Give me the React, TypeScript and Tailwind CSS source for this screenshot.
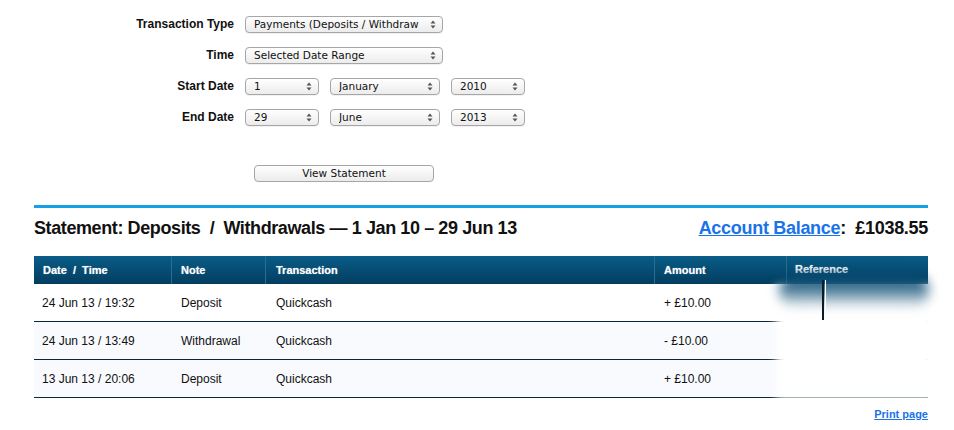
import React from "react";

const Arrows = () => (
  <svg width="6" height="9" viewBox="0 0 6 9" className="shrink-0">
    <path d="M3 0.5 L5.5 3.5 H0.5 Z" fill="#555" />
    <path d="M3 8.5 L5.5 5.5 H0.5 Z" fill="#555" />
  </svg>
);

function Select({ value, w }: { value: string; w: string }) {
  return (
    <div
      className={`${w} h-[17px] flex items-center justify-between pl-[8px] pr-[6px] rounded-[4px] border border-[#a6a6a6] bg-gradient-to-b from-[#ffffff] to-[#ececec] shadow-[0_1px_0_rgba(0,0,0,0.05)]`}
    >
      <span className="text-[10.5px] leading-none text-[#111] whitespace-nowrap overflow-hidden" style={{ fontFamily: '"DejaVu Sans", sans-serif' }}>
        {value}
      </span>
      <Arrows />
    </div>
  );
}

const rows = [
  { d: "24 Jun 13 / 19:32", n: "Deposit", t: "Quickcash", a: "+ £10.00", bg: "bg-white" },
  { d: "24 Jun 13 / 13:49", n: "Withdrawal", t: "Quickcash", a: "- £10.00", bg: "bg-[#f8fafd]" },
  { d: "13 Jun 13 / 20:06", n: "Deposit", t: "Quickcash", a: "+ £10.00", bg: "bg-[#f8fafd]" },
];

const label = "text-right text-[12px] leading-[17px] font-bold text-[#111]";

export default function App() {
  return (
    <div className="w-[954px] h-[430px] bg-white overflow-hidden" style={{ fontFamily: '"Liberation Sans", Arial, sans-serif' }}>
      <div className="pl-[34px] w-[928px]">
        {/* Form */}
        <div className="pt-[16px] grid grid-cols-[200px_auto] gap-x-[11px] gap-y-[14px] items-center">
          <div className={label}>Transaction Type</div>
          <Select value="Payments (Deposits / Withdraw" w="w-[198px]" />
          <div className={label}>Time</div>
          <Select value="Selected Date Range" w="w-[198px]" />
          <div className={label}>Start Date</div>
          <div className="flex gap-[11px]">
            <Select value="1" w="w-[74px]" />
            <Select value="January" w="w-[110px]" />
            <Select value="2010" w="w-[74px]" />
          </div>
          <div className={label}>End Date</div>
          <div className="flex gap-[11px]">
            <Select value="29" w="w-[74px]" />
            <Select value="June" w="w-[110px]" />
            <Select value="2013" w="w-[74px]" />
          </div>
        </div>

        <div className="flex pl-[220px] pt-[39px]">
          <button className="w-[180px] h-[17px] flex items-center justify-center rounded-[4px] border border-[#a6a6a6] bg-gradient-to-b from-[#ffffff] to-[#ebebeb] text-[10.5px] leading-none text-[#111]" style={{ fontFamily: '"DejaVu Sans", sans-serif' }}>
            View Statement
          </button>
        </div>

        <div className="mt-[23px] h-[3px] bg-[#16a0e6]" />

        <div className="flex items-center justify-between mt-[9px] h-[22px]">
          <div className="text-[18px] leading-[22px] font-bold text-[#111] tracking-[-0.4px] whitespace-nowrap">
            Statement: Deposits&nbsp; / &nbsp;Withdrawals — 1 Jan 10 – 29 Jun 13
          </div>
          <div className="text-[18px] leading-[22px] font-bold text-[#111] tracking-[-0.3px] whitespace-nowrap">
            <span className="text-[#1a73e8] underline">Account Balance</span>:&nbsp; £1038.55
          </div>
        </div>

        {/* Table */}
        <div className="relative mt-[17px]">
          <div className="grid grid-cols-[138px_94px_389px_132px_141px] h-[28px] bg-gradient-to-b from-[#0a5d88] to-[#033d60] text-white text-[11px] font-bold [text-shadow:0_0_1px_rgba(255,255,255,0.6)]">
            <div className="pl-[9px] flex items-center border-r border-[#2a6c93]">Date&nbsp; /&nbsp; Time</div>
            <div className="pl-[9px] flex items-center border-r border-[#2a6c93]">Note</div>
            <div className="pl-[10px] flex items-center border-r border-[#2a6c93]">Transaction</div>
            <div className="pl-[9px] flex items-center border-r border-[#2a6c93]">Amount</div>
            <div className="pl-[8px] flex items-center -mt-[2px]">Reference</div>
          </div>
          {rows.map((r, i) => (
            <div key={i} className={`grid grid-cols-[138px_94px_389px_132px_141px] h-[38px] border-b border-[#0c2636] ${r.bg} text-[12px] text-[#111]`}>
              <div className="pl-[8px] flex items-center">{r.d}</div>
              <div className="pl-[9px] flex items-center">{r.n}</div>
              <div className="pl-[10px] flex items-center">{r.t}</div>
              <div className="pl-[9px] flex items-center">{r.a}</div>
              <div />
            </div>
          ))}
          {/* blurred redacted area */}
          <div className="absolute left-[742px] top-[30px] w-[158px] h-[113px] bg-white blur-[4px]" />
          <div className="absolute left-[745px] top-[18px] w-[150px] h-[34px] bg-gradient-to-b from-[#0a4c72] via-[#0a4c72b0] to-[#0a4c7200] blur-[6px] rounded-[24px]" />
          <div className="absolute left-[788px] top-[24px] w-[2px] h-[40px] bg-[#0c1c26]" />
          <div className="absolute left-[791px] top-[24px] w-[1px] h-[40px] bg-white" />
        </div>

        <div className="flex justify-end mt-[10px]">
          <span className="text-[11px] leading-[13px] font-bold text-[#1a73e8] underline">Print page</span>
        </div>
      </div>
    </div>
  );
}
